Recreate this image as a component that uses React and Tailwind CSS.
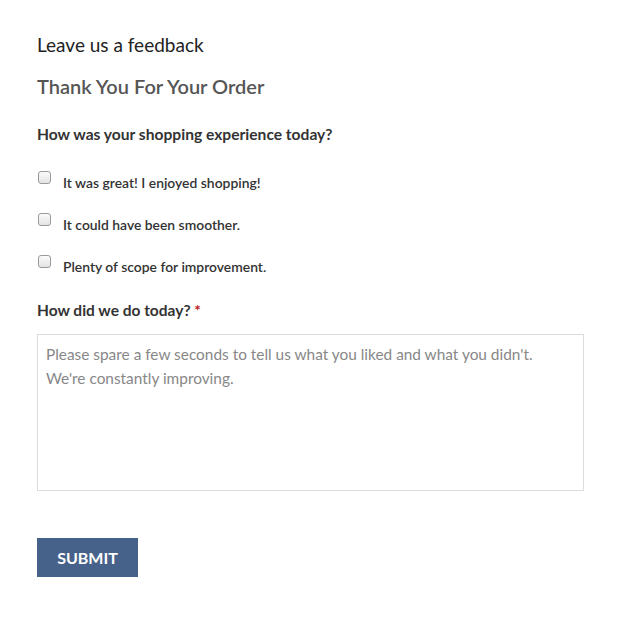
const options = [
  "It was great! I enjoyed shopping!",
  "It could have been smoother.",
  "Plenty of scope for improvement.",
];

export default function App() {
  return (
    <div className="min-h-[633px] bg-white pl-[37px] pr-[46px] pt-[32px] font-['Lato',sans-serif]">
      <h1 className="text-[19px] leading-[26px] text-[#222]">Leave us a feedback</h1>
      <h2 className="mt-[15px] text-[20px] font-semibold leading-[26px] text-[#555]">
        Thank You For Your Order
      </h2>

      <p className="mt-[25px] text-[15.6px] font-bold leading-[20px] text-[#333]">
        How was your shopping experience today?
      </p>

      <div className="mt-[26px] flex flex-col gap-[22px]">
        {options.map((opt) => (
          <label key={opt} className="flex items-start gap-[12px]">
            <input
              type="checkbox"
              className="mt-[1px] ml-[1px] h-[13px] w-[13px] appearance-none rounded-[3px] border border-[#9a9a9a] bg-gradient-to-b from-[#fbfbfb] to-[#e4e4e4]"
            />
            <span className="pt-[6px] text-[13.9px] font-semibold leading-[14px] text-[#333]">
              {opt}
            </span>
          </label>
        ))}
      </div>

      <p className="mt-[26px] text-[15.5px] font-bold leading-[20px] text-[#333]">
        How did we do today? <span className="text-[#b22]">*</span>
      </p>

      <textarea
        className="mt-[14px] block h-[157px] w-full resize-none border border-[#dcdcdc] px-[8px] py-[7px] text-[15.4px] leading-[24px] text-[#333] placeholder:text-[#888] outline-none"
        placeholder={"Please spare a few seconds to tell us what you liked and what you didn't.\nWe're constantly improving."}
      />

      <button className="mt-[47px] h-[39px] w-[101px] bg-[#47628a] text-[16px] font-bold text-white">
        SUBMIT
      </button>
    </div>
  );
}
